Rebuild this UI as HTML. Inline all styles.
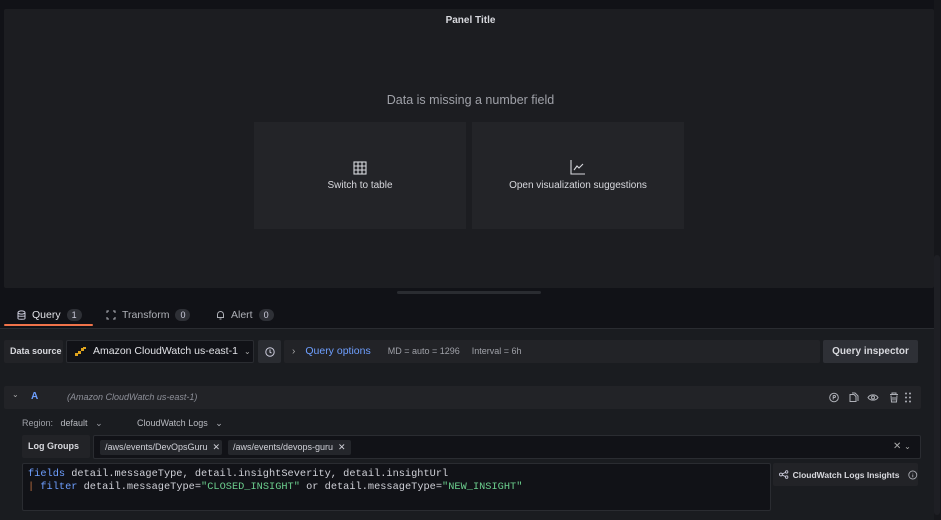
<!DOCTYPE html>
<html><head><style>
*{box-sizing:border-box;margin:0;padding:0}
body{width:941px;height:520px;background:#111217;font-family:"Liberation Sans",sans-serif;color:#ccccdc;position:relative;overflow:hidden;font-size:10px}
.a{position:absolute}
.panel{left:4px;top:9px;width:930px;height:279px;background:#1c1d21;border-radius:2px}
.card{background:#232428;top:122px;height:107px;display:flex;flex-direction:column;align-items:center;justify-content:center;font-size:10px;color:#d8d9de}
.qp{left:0;top:328px;width:934px;height:192px;background:#1a1c20;border-top:1px solid #2a2c31}
.box{background:#222327;border-radius:2px}
.badge{display:inline-block;background:#2e3036;border-radius:8px;padding:1px 5px;font-size:9px;margin-left:6px;color:#ccccdc}
.mono{font-family:"Liberation Mono",monospace;font-size:10.3px;color:#d0d1d8}
</style></head><body>
<div class="a panel"></div>
<div class="a" style="left:0;top:15px;width:941px;text-align:center;font-size:10px;font-weight:bold;color:#d8d9de">Panel Title</div>
<div class="a" style="left:0;top:93px;width:941px;text-align:center;font-size:12.5px;color:#9fa1a8">Data is missing a number field</div>
<div class="a card" style="left:254px;width:212px">
<svg width="14" height="14" viewBox="0 0 14 14" fill="none" stroke="#d8d9de" stroke-width="1.1"><rect x="1" y="1" width="12" height="12"/><path d="M1 5H13M1 9H13M5 1V13M9 1V13"/></svg>
<div style="margin-top:5px">Switch to table</div></div>
<div class="a card" style="left:472px;width:212px">
<svg width="16" height="15" viewBox="0 0 16 15" fill="none" stroke="#d8d9de" stroke-width="1.1"><path d="M1 0V14H15M4 10L7 6L9 8L13 4"/></svg>
<div style="margin-top:5px">Open visualization suggestions</div></div>
<div class="a" style="left:397px;top:291px;width:144px;height:3px;background:#2a2c31;border-radius:2px"></div>
<div class="a" style="left:934px;top:0;width:7px;height:520px;background:#16171b"></div>
<div class="a" style="left:934px;top:255px;width:6px;height:260px;background:#1e1f24;border-radius:3px"></div>

<!-- tabs -->
<div class="a" style="left:17px;top:309px;font-size:10.5px;color:#e0e1e6;display:flex;align-items:center">
<svg width="9" height="11" viewBox="0 0 9 11" fill="none" stroke="#ccccdc" stroke-width="1"><ellipse cx="4.5" cy="2.5" rx="3.5" ry="1.6"/><path d="M1 2.5V8.5C1 9.5 8 9.5 8 8.5V2.5M1 5.5C1 6.5 8 6.5 8 5.5"/></svg>
<span style="margin-left:6px">Query</span><span class="badge">1</span></div>
<div class="a" style="left:4px;top:324px;width:89px;height:2px;background:#f0734a;border-radius:1px"></div>
<div class="a" style="left:106px;top:309px;font-size:10.5px;color:#aeb0b7;display:flex;align-items:center">
<svg width="10" height="10" viewBox="0 0 10 10" fill="none" stroke="#aeb0b7" stroke-width="1"><path d="M1 3V1H3M7 1H9V3M9 7V9H7M3 9H1V7"/></svg>
<span style="margin-left:6px">Transform</span><span class="badge">0</span></div>
<div class="a" style="left:216px;top:309px;font-size:10.5px;color:#aeb0b7;display:flex;align-items:center">
<svg width="9" height="10" viewBox="0 0 9 10" fill="none" stroke="#aeb0b7" stroke-width="1"><path d="M1.5 7.5V4.5A3 3 0 0 1 7.5 4.5V7.5H1.5M1 7.5H8M3.5 9H5.5"/></svg>
<span style="margin-left:6px">Alert</span><span class="badge">0</span></div>

<div class="a qp"></div>
<!-- data source row -->
<div class="a box" style="left:4px;top:340px;width:59px;height:23px;font-size:9px;font-weight:bold;line-height:23px;padding-left:6px;color:#d8d9de">Data source</div>
<div class="a" style="left:66px;top:340px;width:188px;height:23px;background:#111217;border:1px solid #2a2c31;border-radius:2px;font-size:10.5px;color:#e0e1e6;line-height:21px;padding-left:8px;display:flex;align-items:center;white-space:nowrap">
<svg width="11" height="9" viewBox="0 0 11 9"><path d="M0 6h3v3H0zM3 4h3v3H3zM6 1h3v3H6zM8 0h3v2H8z" fill="#e0a41d"/></svg>
<span style="margin-left:7px">Amazon CloudWatch us-east-1</span><span style="margin-left:6px;font-size:8px;color:#aaa">⌄</span></div>
<div class="a box" style="left:258px;top:340px;width:23px;height:23px;background:#2a2c31;display:flex;align-items:center;justify-content:center">
<svg width="10" height="10" viewBox="0 0 10 10" fill="none" stroke="#ccccdc" stroke-width="1"><circle cx="5" cy="5" r="4.2"/><path d="M5 2.5V5.3L6.5 6"/></svg></div>
<div class="a box" style="left:284px;top:340px;width:536px;height:23px;line-height:23px;font-size:10px;padding-left:8px">
<span style="color:#aaa">›</span><span style="color:#6e9fff;margin-left:10px;font-size:10.5px">Query options</span><span style="color:#9fa1a8;margin-left:17px;font-size:9px">MD = auto = 1296</span><span style="color:#9fa1a8;margin-left:12px;font-size:9px">Interval = 6h</span></div>
<div class="a" style="left:823px;top:340px;width:95px;height:23px;background:#2e3036;border-radius:2px;font-size:10px;font-weight:bold;line-height:23px;text-align:center;color:#d8d9de">Query inspector</div>

<!-- A row -->
<div class="a box" style="left:4px;top:386px;width:917px;height:23px"></div>
<div class="a" style="left:12px;top:390px;font-size:8px;color:#aaa">⌄</div>
<div class="a" style="left:31px;top:391px;font-size:10px;font-weight:bold;color:#6e9fff">A</div>
<div class="a" style="left:67px;top:392px;font-size:9px;font-style:italic;color:#8e9099">(Amazon CloudWatch us-east-1)</div>
<svg class="a" style="left:828px;top:391px" width="85" height="13" viewBox="0 0 85 13" fill="none" stroke="#aeb0b7" stroke-width="1">
<circle cx="6" cy="6.5" r="4.3"/><path d="M5.2 4.5h1.3a1 1 0 0 1 0 2H5.2V8.5M5.2 4.5V6.5"/>
<path d="M22 3.5h4l2 2V10.5h-6zM24 2h3l3 3v5"/>
<path d="M40 6.5C42 3 48 3 50 6.5C48 10 42 10 40 6.5Z"/><circle cx="45" cy="6.5" r="1.5"/>
<path d="M62 3.5h8M64 3.5V2h4v1.5M63 4.5l.5 6.5h5l.5-6.5M65 6v3.5M67 6v3.5"/>
<g fill="#aeb0b7" stroke="none"><circle cx="78" cy="2.5" r="1"/><circle cx="82" cy="2.5" r="1"/><circle cx="78" cy="6.5" r="1"/><circle cx="82" cy="6.5" r="1"/><circle cx="78" cy="10.5" r="1"/><circle cx="82" cy="10.5" r="1"/></g></svg>

<!-- region -->
<div class="a" style="left:22px;top:418px;font-size:9px;color:#9fa1a8">Region:&nbsp;&nbsp; <span style="color:#b8bac0">default</span> &nbsp;&nbsp;⌄</div>
<div class="a" style="left:137px;top:418px;font-size:9px;color:#b8bac0">CloudWatch Logs &nbsp;&nbsp;⌄</div>

<!-- log groups -->
<div class="a box" style="left:22px;top:435px;width:68px;height:23px;font-size:9px;font-weight:bold;line-height:23px;padding-left:6px;color:#d8d9de">Log Groups</div>
<div class="a" style="left:93px;top:435px;width:828px;height:24px;background:#111217;border:1px solid #2a2c31;border-radius:2px"></div>
<div class="a" style="left:100px;top:440px;width:122px;height:15px;background:#24262b;border-radius:2px;font-size:9px;line-height:15px;padding-left:5px;color:#d0d1d8;white-space:nowrap">/aws/events/DevOpsGuru &nbsp;✕</div>
<div class="a" style="left:228px;top:440px;width:123px;height:15px;background:#24262b;border-radius:2px;font-size:9px;line-height:15px;padding-left:5px;color:#d0d1d8;white-space:nowrap">/aws/events/devops-guru &nbsp;✕</div>
<div class="a" style="left:893px;top:441px;font-size:10px;color:#aaa">✕ <span style="font-size:8px">⌄</span></div>

<!-- code -->
<div class="a" style="left:22px;top:463px;width:749px;height:48px;background:#111217;border:1px solid #2a2c31;border-radius:2px"></div>
<div class="a mono" style="left:28px;top:468px;line-height:13px;white-space:pre"><span style="color:#6e9fff">fields</span> detail.messageType, detail.insightSeverity, detail.insightUrl
<span style="color:#c07040">|</span> <span style="color:#6e9fff">filter</span> detail.messageType=<span style="color:#6ccf8e">"CLOSED_INSIGHT"</span> or detail.messageType=<span style="color:#6ccf8e">"NEW_INSIGHT"</span></div>
<div class="a box" style="left:773px;top:463px;width:145px;height:23px;font-size:8.5px;font-weight:bold;color:#d8d9de;display:flex;align-items:center;padding-left:6px;white-space:nowrap">
<svg width="10" height="9" viewBox="0 0 10 9" fill="none" stroke="#ccccdc" stroke-width="0.9"><circle cx="2" cy="4.5" r="1.5"/><circle cx="8" cy="1.8" r="1.3"/><circle cx="8" cy="7.2" r="1.3"/><path d="M3.4 3.9L6.8 2.3M3.4 5.1L6.8 6.7"/></svg>
<span style="margin-left:4px">CloudWatch Logs Insights</span>
<svg style="margin-left:9px" width="10" height="10" viewBox="0 0 10 10" fill="none" stroke="#aeb0b7" stroke-width="0.9"><circle cx="5" cy="5" r="4.2"/><path d="M5 4.5V7.3M5 2.8V3.3"/></svg></div>
</body></html>
